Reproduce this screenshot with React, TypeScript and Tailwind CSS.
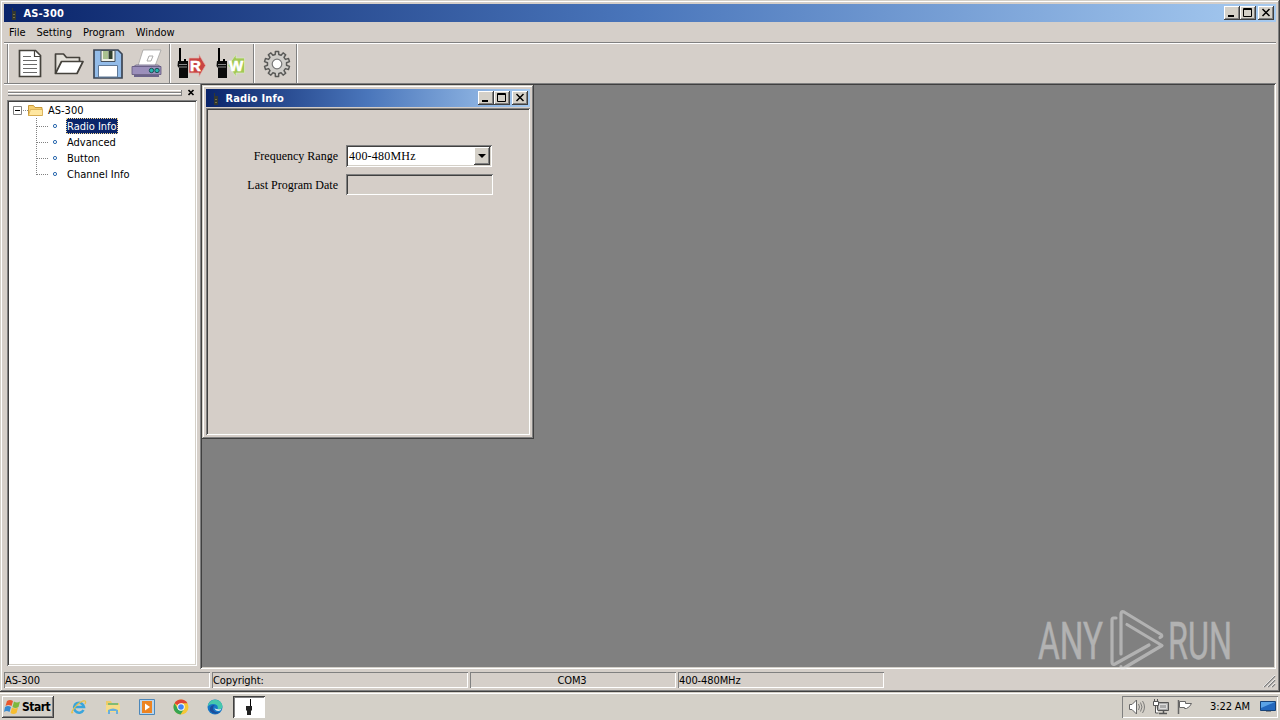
import { ReactNode } from 'react';

const TREE_ITEMS = ['Radio Info', 'Advanced', 'Button', 'Channel Info'];

const RAISED = 'shadow-[inset_-1px_-1px_#404040,inset_1px_1px_#fff,inset_-2px_-2px_#808080]';
const FRAME = 'shadow-[inset_-1px_-1px_#404040,inset_1px_1px_#d4d0c8,inset_-2px_-2px_#808080,inset_2px_2px_#fff]';
const SUNKEN = 'shadow-[inset_1px_1px_#808080,inset_-1px_-1px_#fff,inset_2px_2px_#404040,inset_-2px_-2px_#d4d0c8]';

// toothed outline of the settings gear
function gearPath(teeth: number, outer: number, inner: number) {
  const step = (Math.PI * 2) / teeth;
  const points: string[] = [];
  for (let i = 0; i < teeth; i++) {
    const a = i * step - Math.PI / 2;
    [[-0.3, inner], [-0.2, outer], [0.2, outer], [0.3, inner]].forEach(([offset, r]) => {
      const angle = a + offset * step;
      points.push(`${(15 + Math.cos(angle) * r).toFixed(2)} ${(15 + Math.sin(angle) * r).toFixed(2)}`);
    });
  }
  return `M${points.join('L')}Z`;
}

function NewIcon() {
  return (
    <svg width="30" height="30" fill="none">
      <path d="M4.500 1.500h16l5 5v21h-21z" fill="#fff" stroke="#45423c" strokeWidth="1.700" />
      <path d="M19.500 1.500v6h6" stroke="#45423c" strokeWidth="1.200" />
      <path d="M8 7.500h8M8 11.500h14M8 15.500h14M8 19.500h14M8 23.500h14" stroke="#6a6a6a" strokeWidth="1.200" />
    </svg>
  );
}

function OpenIcon() {
  return (
    <svg width="30" height="30" fill="none" stroke="#45423c" strokeWidth="1.700" strokeLinejoin="round">
      <path d="M1.500 24.500V5h8l3 3.500h13v4" fill="#e4e1da" />
      <path d="M1.500 24.500L7.500 12.500h21.500l-6 12z" fill="#fff" />
    </svg>
  );
}

function SaveIcon() {
  return (
    <svg width="30" height="30" fill="none">
      <path d="M1 1h24l4 4v24H1z" fill="#93bce9" stroke="#3c4654" strokeWidth="1.700" />
      <path d="M8 1.500h14v11H8z" fill="#eef0e6" stroke="#46505c" />
      <path d="M10 2h5v8h-5z" fill="#a9c08f" />
      <path d="M15.500 2h4v8h-4z" fill="#31402f" />
      <path d="M5.500 16.500h19V28h-19z" fill="#fff" stroke="#5f7896" />
    </svg>
  );
}

function PrintIcon() {
  return (
    <svg width="32" height="30" fill="none">
      <path d="M12 1h18l-6 16H7z" fill="#fff" stroke="#999" strokeWidth=".7" />
      <path d="M18 7h4l-2 5h-4z" stroke="#aaa" />
      <path d="M5 16h22l3 2H2z" fill="#b7b0c8" stroke="#655e82" strokeWidth=".8" />
      <path d="M1 17.500h29v8H1z" fill="#9b8fbb" stroke="#5f567c" strokeWidth=".8" />
      <path d="M3 26h25v2H3z" fill="#6b638a" />
      <circle cx="20.500" cy="21.500" r="2.200" fill="#26b6b0" stroke="#204e55" />
      <circle cx="26" cy="21.500" r="2.200" fill="#26b6b0" stroke="#204e55" />
    </svg>
  );
}

function RadioIcon({ letter }: { letter: 'R' | 'W' }) {
  const read = letter === 'R';
  return (
    <svg width="30" height="32" fill="none">
      <path d="M3 0h2v14H3z" fill="#000" />
      <path d="M2 13h10v17H3V20L1.500 18z" fill="#0b0b0b" />
      <path d="M8 11h2v3H8z" fill="#000" />
      <path d="M3 16.500h8M3 19h8" stroke="#888" />
      {read ? (
        <path d="M13 10h10V6.500l6.500 11L23 28.500V25H13z" fill="#c94443" stroke="#e3b4ae" strokeWidth=".7" />
      ) : (
        <path d="M29.500 10H21V6.500l-8 11 8 11V25h8.500z" fill="#a3c956" stroke="#dbe8c5" strokeWidth=".7" />
      )}
      <text
        x="14"
        y="23"
        fill="#fff"
        stroke="#fff"
        strokeWidth=".6"
        className="font-['Liberation_Sans',sans-serif] text-[15px] font-bold tracking-normal"
      >
        {letter}
      </text>
    </svg>
  );
}

function GearIcon() {
  return (
    <svg width="30" height="30" fill="none" stroke="#5a5a58" strokeWidth="1.500" strokeLinejoin="round">
      <path d={gearPath(10, 12.7, 9.6)} fill="#cfcdc9" />
      <circle cx="15" cy="15" r="4.800" fill="#fff" stroke="#777" strokeWidth="1.200" />
    </svg>
  );
}

function ToolButton({ children }: { children: ReactNode }) {
  return <div className="flex h-[39px] w-[39px] items-center justify-center">{children}</div>;
}

function Separator() {
  return <div className="h-[39px] w-[2px] border-l border-[#808080] bg-white" />;
}

function AppIcon() {
  return (
    <svg width="16" height="16">
      <path d="M5 3h1v3h3v9H5z" fill="#333831" />
      <path d="M6 9h2v1H6zM6 12h2v1H6z" fill="#777045" />
    </svg>
  );
}

function CaptionButton({ kind }: { kind: 'min' | 'max' | 'close' }) {
  return (
    <div className={`h-[14px] w-4 bg-[#d4d0c8] ${RAISED}`}>
      <svg width="16" height="14" fill="none" stroke="#000">
        {kind === 'min' && <path d="M4 10h6" strokeWidth="2" />}
        {kind === 'max' && <path d="M3.500 2.500h8v8h-8zM3 3.500h9" />}
        {kind === 'close' && <path d="M4.500 3l7 7M11.500 3l-7 7" strokeWidth="1.500" />}
      </svg>
    </div>
  );
}

function TitleBar({ title }: { title: string }) {
  return (
    <div className="flex h-[18px] shrink-0 items-center bg-linear-to-r/srgb from-[#0a246a] via-[#4a76bb] to-[#a6caf0] pr-[2px] pl-[3px]">
      <AppIcon />
      <span className="h-[18px] grow pt-[1px] pl-[0.5px] font-['DejaVu_Sans_Condensed','DejaVu_Sans',sans-serif] text-[11px] leading-[17px] font-bold tracking-[0.15px] text-white">
        {title}
      </span>
      <CaptionButton kind="min" />
      <CaptionButton kind="max" />
      <div className="w-[2px]" />
      <CaptionButton kind="close" />
    </div>
  );
}

function Tree() {
  return (
    <div className={`mt-[4px] ml-[3px] h-[566px] w-[190px] bg-white p-[2px] ${SUNKEN}`}>
      <div className="flex h-4 items-center">
        <svg width="38" height="16" fill="none">
          <path d="M4.500 4.500h8v8h-8z" fill="#fff" stroke="#808080" />
          <path d="M6 8.500h5" stroke="#000" />
          <path d="M14 8.500h5" stroke="#888" strokeDasharray="1 1" />
          <path d="M19.500 13.500v-10h5l1.500 2h7v8z" fill="#f5cf72" stroke="#c99a39" />
          <path d="M19.500 13.500l2-6h12v6z" fill="#ffe7a0" stroke="#d3a546" strokeWidth=".7" />
        </svg>
        <span className="ml-[1px] pt-[2px] leading-4">AS-300</span>
      </div>
      {TREE_ITEMS.map((item, i) => (
        <div key={item} className="flex h-4 items-center">
          <svg width="56" height="16" fill="none" stroke="#808080">
            <path d={i === TREE_ITEMS.length - 1 ? 'M27.500 0v9' : 'M27.500 0v16'} strokeDasharray="1 1" />
            <path d="M28 8.500h11" strokeDasharray="1 1" />
            <circle cx="46" cy="8" r="1.600" stroke="#2d6bb0" />
          </svg>
          <span
            className={i === 0
              ? 'ml-[1px] h-4 bg-[#0a246a] px-[1px] pt-[1px] leading-[15px] text-white outline-1 -outline-offset-1 outline-[#f5db95] outline-dotted'
              : 'ml-[1px] h-4 px-[1px] pt-[1px] leading-[15px]'}
          >
            {item}
          </span>
        </div>
      ))}
    </div>
  );
}

function RadioInfoWindow() {
  return (
    <div className={`flex h-[354px] w-[332px] flex-col bg-[#d5cec8] p-1 ${FRAME}`}>
      <TitleBar title="Radio Info" />
      <div className={`mt-[1px] grow pt-[37px] pl-[34px] font-['Liberation_Serif',serif] text-[12px] tracking-normal ${SUNKEN}`}>
        <div className="flex h-[21px] items-center">
          <span className="w-[98px] text-right">Frequency Range</span>
          <div className={`ml-2 flex h-[22px] w-[146px] items-center justify-between bg-white p-[2px] ${SUNKEN}`}>
            <span className="pl-[1px] tracking-[0.2px]">400-480MHz</span>
            <div className={`flex h-[18px] w-4 items-center justify-center bg-[#d4d0c8] ${RAISED}`}>
              <svg width="8" height="4"><path d="M0 0h8L4 4z" /></svg>
            </div>
          </div>
        </div>
        <div className="mt-2 flex h-[21px] items-center">
          <span className="w-[98px] text-right">Last Program Date</span>
          <div className={`ml-2 h-[21px] w-[147px] ${SUNKEN}`} />
        </div>
      </div>
    </div>
  );
}

function StatusPane({ className, children }: { className: string; children: ReactNode }) {
  return (
    <div className={`h-[16px] pt-[1px] pl-[1px] leading-4 tracking-[-0.1px] shadow-[inset_1px_1px_#808080,inset_-1px_-1px_#fff] ${className}`}>{children}</div>
  );
}

function Watermark() {
  return (
    <svg width="204" height="72" fill="none" className="absolute top-[607px] left-[1035px] overflow-visible opacity-50">
      <g fill="#e4e4e4" stroke="#e4e4e4" strokeWidth=".4" className="font-['Roboto',sans-serif] text-[52px] font-normal tracking-normal">
        <text x="3" y="52" textLength="65" lengthAdjust="spacingAndGlyphs">ANY</text>
        <text x="133" y="52" textLength="64" lengthAdjust="spacingAndGlyphs">RUN</text>
      </g>
      <g stroke="#e4e4e4" strokeWidth="3.200" strokeLinejoin="round" strokeLinecap="round">
        <path d="M81 11h-2.500q-1.500 0-1.500 2v42q0 3.500 3 2L114 38" />
        <path d="M86 47V7q0-3.500 3-2l37 22.500q2 2-1 3" />
        <path d="M92 17.500l35 21-38 22.500q-3 1.500-3-1.500" />
      </g>
    </svg>
  );
}

function Taskbar() {
  return (
    <div className="flex h-7 items-center border-t border-[#d4d0c8] bg-[#d4d0c8] px-[2px] pt-[1px] shadow-[inset_0_1px_#fff]">
      <div className={`flex h-[22px] w-[52px] items-center pl-[2px] ${RAISED}`}>
        <svg width="17" height="16" className="shrink-0">
          <path d="M3 2q3-2 6 0L7.500 7q-3-2-6 0z" fill="#e9572d" />
          <path d="M10 2.500q3 2 6 0L14.500 8q-3 2-6 0z" fill="#7db83d" />
          <path d="M1 8q3-2 6 0l-1.500 5q-3-2-5.500 0z" fill="#388bd1" />
          <path d="M8 8.500q3 2 6 0L12.500 14q-3 2-6 0z" fill="#f6bd30" />
        </svg>
        <span className="ml-[1px] text-[12px] font-bold tracking-[-0.5px]">Start</span>
      </div>
      <div className="ml-[17px] flex items-center gap-[18px]">
        <svg width="16" height="16" fill="none">
          <path d="M12.500 11a5 5 0 1 1 .5-3H4" stroke="#39a5dc" strokeWidth="2.500" />
          <path d="M2 13C-2 17 4 5 12 2q4-1 2 3" stroke="#e9c24b" strokeWidth="1.300" />
        </svg>
        <svg width="16" height="16">
          <path d="M1 2h5l1 2h7v8H1z" fill="#edcc68" />
          <path d="M3 4h10v5H3z" fill="#81bb73" />
          <path d="M1 6h14v7H1z" fill="#f6dc88" />
          <path d="M3 15v-4q5-3 10 0v4h-2v-3H5v3z" fill="#69afdc" />
        </svg>
        <svg width="16" height="16">
          <path d="M.5.500h15v15H.5z" fill="#b9d5ed" stroke="#4c87b9" />
          <path d="M3 2h10v12H3z" fill="#ed8422" />
          <path d="M6 4.500l5 3.500-5 3.500z" fill="#fff" />
        </svg>
        <svg width="16" height="16">
          <circle cx="8" cy="8" r="7.500" fill="#f5c736" />
          <path d="M8 8L1.500 4.200A7.500 7.500 0 0 1 14.500 4.200H8z" fill="#df4436" />
          <path d="M1.500 4.200A7.500 7.500 0 0 0 7.500 15.500L11 10H5z" fill="#35a552" />
          <circle cx="8" cy="8" r="3.700" fill="#fff" />
          <circle cx="8" cy="8" r="2.800" fill="#4285f4" />
        </svg>
        <svg width="16" height="16">
          <circle cx="8" cy="8" r="7.500" fill="#1677c7" />
          <path d="M1 6C3-1 14-1 15.500 7q0 4-5 3.500Q12 5 6 5 3 5 1 7z" fill="#46c8ad" />
          <path d="M6 9q0 5 7 4-5 4-10-1-1-6 5-6-2 1-2 3z" fill="#1c4d9b" />
          <path d="M7.500 8q0 3 7 2-1 2-3 2-4 0-4-4z" fill="#d4e6ed" />
        </svg>
      </div>
      <div className="ml-[10px] h-[22px] w-[32px] bg-white shadow-[inset_1px_1px_#404040,inset_-1px_-1px_#fff,inset_2px_2px_#808080]">
        <svg width="32" height="22">
          <path d="M17 3h1v8h-1z" />
          <path d="M13 10h6v4l-1 1v4h-4v-4l-1-1z" fill="#222" />
        </svg>
      </div>
      <div className="grow" />
      <div className="flex h-[22px] w-[156px] items-center pl-[7px] shadow-[inset_1px_1px_#808080,inset_-1px_-1px_#fff]">
        <svg width="16" height="16" fill="none" stroke="#666">
          <path d="M.5 5.500H3L7.500 1v14L3 10.500H.5z" fill="#fff" />
          <path d="M9.500 5q2 3 0 6M11.500 3.500q3 4.500 0 9M13.500 2q4 6 0 12" strokeWidth=".8" />
        </svg>
        <svg width="16" height="16" fill="none" stroke="#555" className="ml-2">
          <path d="M4.500 3.500h11v8h-11z" fill="#aaa" />
          <path d="M6.500 5.500h7v4h-7z" stroke="#ddd" />
          <path d="M6 14.500h8M10.500 12v2" strokeWidth="1.500" />
          <path d="M.5 2.500h5v4h-5zM1.500 0v2M4.500 0v2M2.500 7v7h3" fill="#fff" />
        </svg>
        <svg width="17" height="16" fill="none" stroke="#666" className="ml-2">
          <path d="M1.500 1v14" strokeWidth="1.500" />
          <path d="M2.500 2.500h6v2h6l-2 3 -3 2h-2v-1h-5z" fill="#fff" />
        </svg>
        <span className="ml-[16px] w-[42px] pt-[1px] tracking-[-0.1px] whitespace-nowrap">3:22 AM</span>
        <svg width="16" height="16" className="ml-[8px]">
          <path d="M.5 2.500h15v9H.5z" fill="#2368bd" stroke="#174277" />
          <path d="M1 3h14L1 9z" fill="#5ba3e6" />
          <path d="M6 12h5v1H6z" fill="#888" />
        </svg>
      </div>
    </div>
  );
}

export default function App() {
  return (
    <div className="relative flex h-[720px] w-[1280px] flex-col overflow-hidden font-['DejaVu_Sans_Condensed','DejaVu_Sans',sans-serif] text-[11px] tracking-normal text-black">
      <div className={`flex h-[692px] flex-col bg-[#d5cfc9] p-1 ${FRAME}`}>
        <TitleBar title="AS-300" />
        <div className="flex h-5 items-center gap-[11px] pt-[2px] pl-[5px]">
          <span>File</span>
          <span>Setting</span>
          <span>Program</span>
          <span>Window</span>
        </div>
        <div className="flex h-[41px] border-t border-[#808080] pt-[1px] pl-[3px] shadow-[inset_0_1px_#fff]">
          <Separator />
          <div className="w-[1px]" />
          <ToolButton><NewIcon /></ToolButton>
          <ToolButton><OpenIcon /></ToolButton>
          <ToolButton><SaveIcon /></ToolButton>
          <ToolButton><PrintIcon /></ToolButton>
          <div className="w-[3px]" />
          <Separator />
          <ToolButton><RadioIcon letter="R" /></ToolButton>
          <ToolButton><RadioIcon letter="W" /></ToolButton>
          <div className="w-[4px]" />
          <Separator />
          <div className="w-[2px]" />
          <ToolButton><GearIcon /></ToolButton>
          <Separator />
        </div>
        <div className="flex h-[586px]">
          <div className="w-[196px] border-t border-[#808080] shadow-[inset_0_1px_#fff]">
            <div className="flex h-3 items-end pl-1">
              <div className="w-[174px] border-r border-[#808080]">
                <div className="h-[3px] border-t border-b border-t-white border-b-[#808080]" />
                <div className="h-[3px] border-t border-b border-t-white border-b-[#808080]" />
              </div>
              <svg width="7" height="7" className="ml-[6px]"><path d="M.5 1l5 5M5.500 1l-5 5" stroke="#000" strokeWidth="1.600" /></svg>
            </div>
            <Tree />
          </div>
          <div className={`grow bg-[#808080] p-[2px] ${SUNKEN}`}>
            <RadioInfoWindow />
          </div>
        </div>
        <div className="flex h-[19px] gap-[2px] pt-[3px]">
          <StatusPane className="w-[206px]">AS-300</StatusPane>
          <StatusPane className="w-[256px]">Copyright:</StatusPane>
          <StatusPane className="w-[206px] pr-[3px] text-center">COM3</StatusPane>
          <StatusPane className="w-[206px]">400-480MHz</StatusPane>
          <div className="grow" />
          <svg width="13" height="13" className="mt-[3px]">
            <path d="M1 12L12 1M5 12l7-7M9 12l3-3" stroke="#808080" strokeWidth="1.500" />
            <path d="M0 12L12 0M4 12l8-8M8 12l4-4" stroke="#fff" strokeWidth=".7" />
          </svg>
        </div>
      </div>
      <Taskbar />
      <Watermark />
    </div>
  );
}
